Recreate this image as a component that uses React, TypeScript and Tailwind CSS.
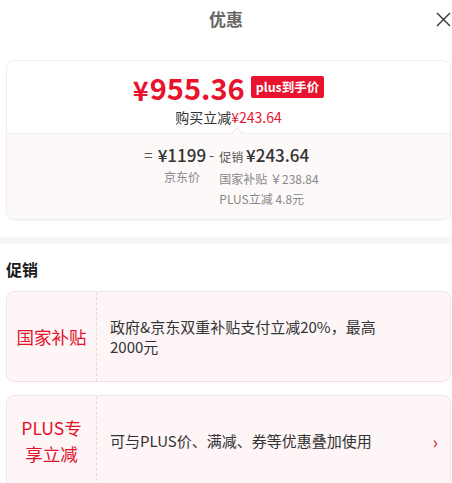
import React from 'react'

const font = { fontFamily: '"Noto Sans CJK SC", "Noto Sans", sans-serif' }

function PromoBox({ label, children, arrow }: { label: React.ReactNode; children: React.ReactNode; arrow?: boolean }) {
  return (
    <div className="ml-[6px] w-[445px] flex rounded-lg border border-[#f3e3e5] bg-[#fdf5f6]">
      <div className="w-[90px] shrink-0 flex items-center justify-center border-r border-dashed border-[#ead6d8] text-[17.5px] leading-[26px] text-[#e3112b] text-center">
        {label}
      </div>
      <div className="flex-1 flex items-center pl-[13px] pr-3 text-[15px] leading-[20px] text-[#333]">
        <div className="flex-1">{children}</div>
        {arrow && <span className="text-[#e3112b] text-[18px]">›</span>}
      </div>
    </div>
  )
}

export default function App() {
  return (
    <div className="w-[452px] h-[483px] overflow-hidden bg-white" style={font}>
      <div className="relative h-[38px] flex items-center justify-center">
        <span className="text-[17px] font-bold text-[#666]">优惠</span>
        <svg className="absolute right-[1px] top-[12px]" width="15" height="15" viewBox="0 0 15 15">
          <path d="M1 1 L14 14 M14 1 L1 14" stroke="#333" strokeWidth="1.4" />
        </svg>
      </div>

      <div className="mt-[22px] ml-[6px] w-[445px] rounded-lg border border-[#eee] shadow-[0_1px_2px_rgba(0,0,0,0.04)] overflow-hidden">
        <div className="h-[72px] flex flex-col items-center pt-[9px]">
          <div className="flex items-center">
            <span className="text-[#e8132d] font-bold text-[27px] leading-none mt-[4px]">¥</span>
            <span className="text-[#e8132d] font-bold text-[29px] leading-[34px] ml-[1px]">955.36</span>
            <span className="ml-[6px] bg-[#e8132d] text-white text-[12.5px] font-bold leading-[22px] px-[5px] rounded-[2px]">plus到手价</span>
          </div>
          <div className="text-[14px] leading-[20px] mt-[3px] text-[#333]">
            购买立减<span className="text-[#e8132d]">¥243.64</span>
          </div>
        </div>
        <div className="relative border-t border-[#f3eaea] bg-[#fdf9f9] h-[86px] pt-[10px]">
          <div className="absolute left-[226px] -top-[5px] w-[8px] h-[8px] rotate-45 bg-[#fdf9f9] border-l border-t border-[#f3eaea]" />
          <div className="flex justify-center text-[#333]">
            <div className="flex items-start pl-[6px]">
              <span className="text-[15px] leading-[22px] text-[#555] mr-[5px]">=</span>
              <div className="flex flex-col items-center">
                <span className="text-[17px] leading-[22px] font-medium">¥1199</span>
                <span className="text-[12px] leading-[20px] text-[#888] mt-[1px]">京东价</span>
              </div>
              <span className="text-[15px] leading-[22px] text-[#555] ml-[3px] mr-[5px]">-</span>
              <div className="flex flex-col">
                <div className="leading-[22px]">
                  <span className="text-[12px] text-[#555]">促销 </span>
                  <span className="text-[17px] font-medium">¥243.64</span>
                </div>
                <span className="text-[12px] leading-[20px] text-[#888] mt-[1px]">国家补贴 ￥238.84</span>
                <span className="text-[12px] leading-[20px] text-[#888]">PLUS立减 4.8元</span>
              </div>
            </div>
          </div>
        </div>
      </div>

      <div className="mt-[17px] h-[7px] bg-[#f6f6f9]" />

      <div className="pl-[6px] pt-[15px] pb-[12px] text-[16px] leading-[20px] font-bold text-[#1a1a1a]">促销</div>

      <div className="h-[91px] flex">
        <PromoBox label="国家补贴">
          政府&amp;京东双重补贴支付立减20%，最高
          <br />
          2000元
        </PromoBox>
      </div>

      <div className="mt-[13px] h-[92px] flex">
        <PromoBox label={<span>PLUS专<br />享立减</span>} arrow>
          可与PLUS价、满减、券等优惠叠加使用
        </PromoBox>
      </div>
    </div>
  )
}
